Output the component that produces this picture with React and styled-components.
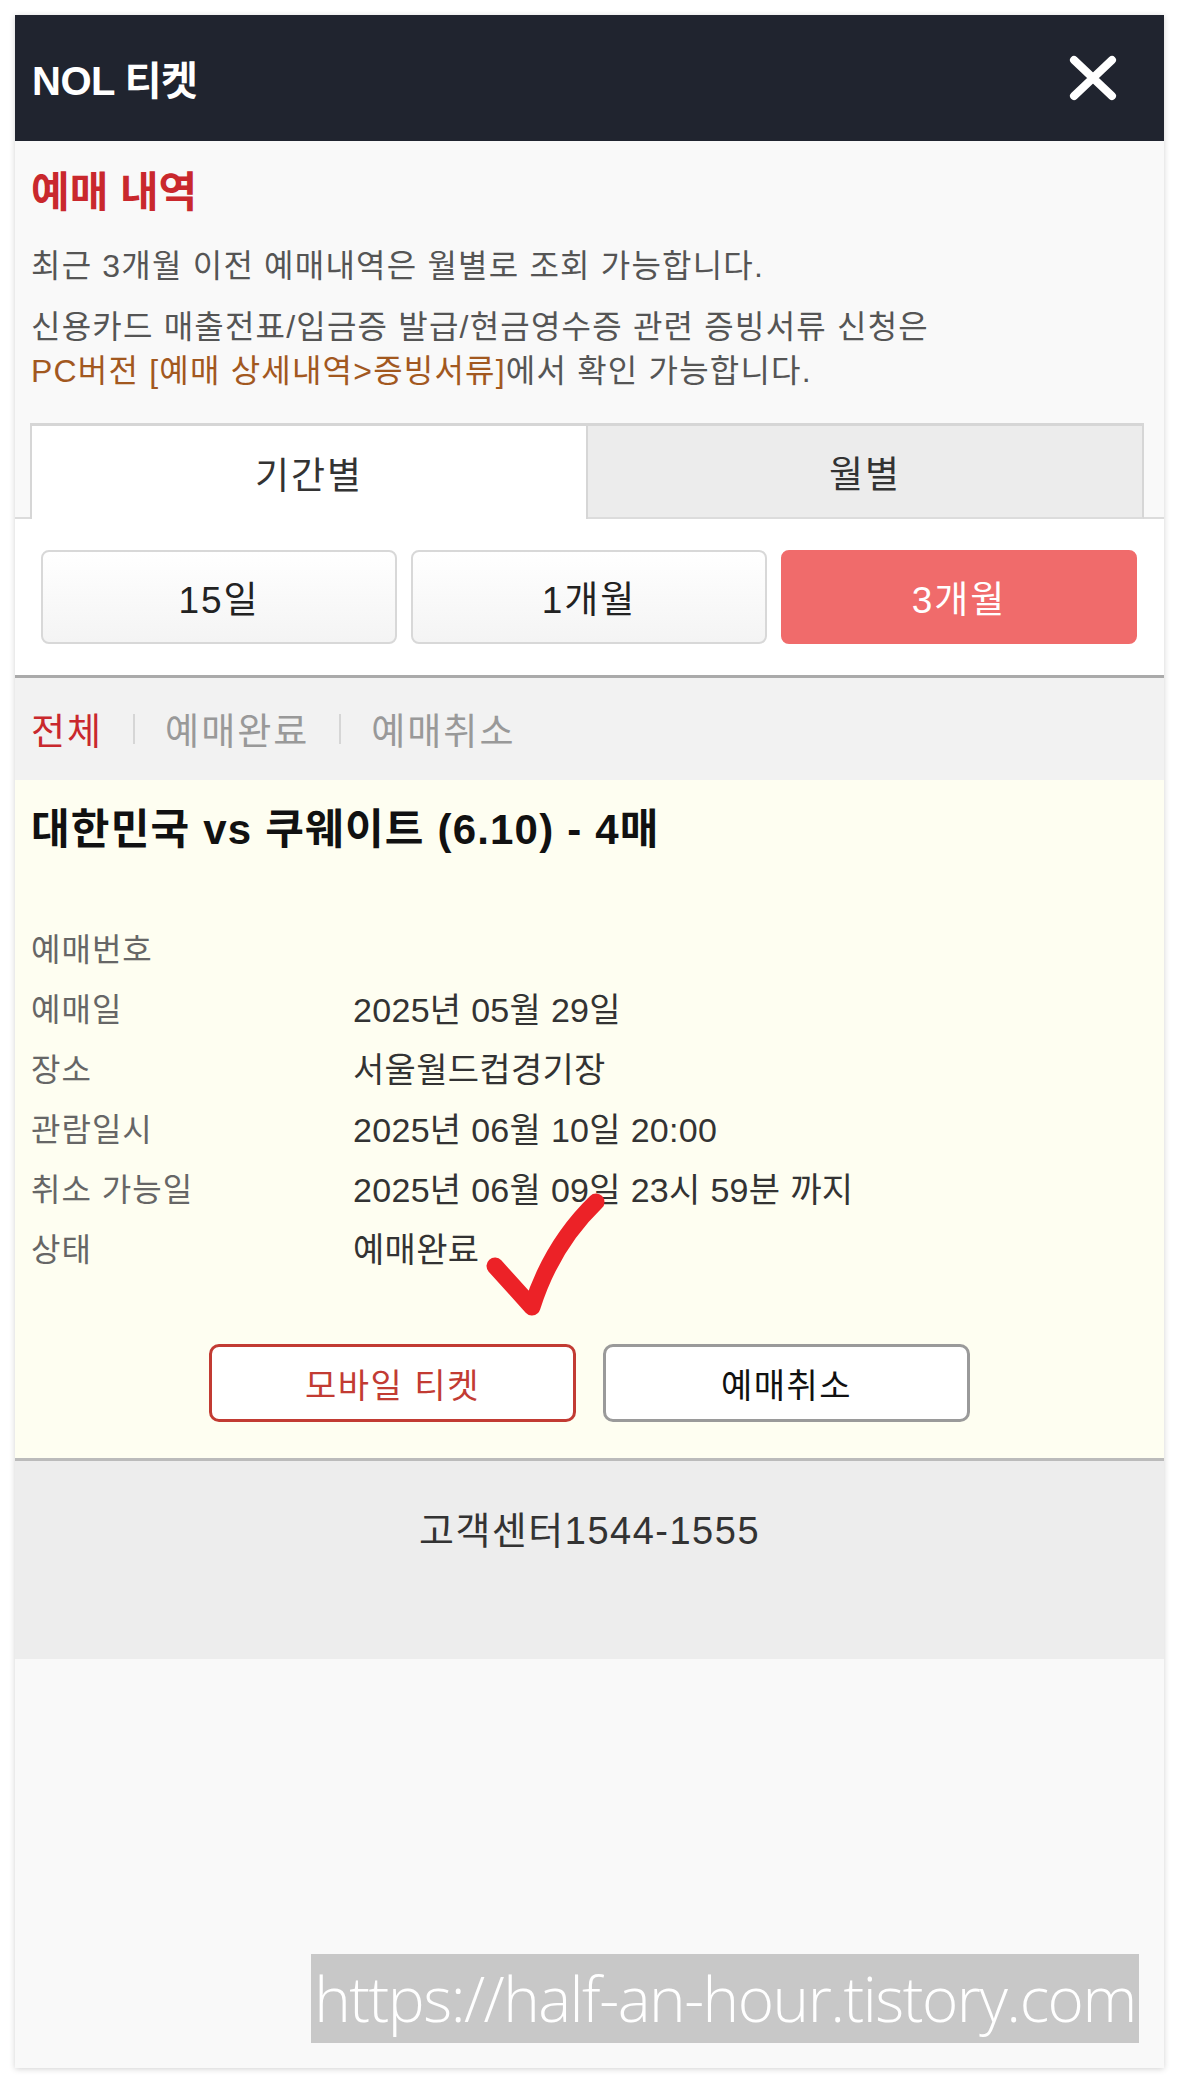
import React from 'react';
import styled, { createGlobalStyle } from 'styled-components';

const GlobalStyle = createGlobalStyle`
  body {
    margin: 0;
    background: #ffffff;
    font-family: "Liberation Sans", "Noto Sans CJK KR", sans-serif;
  }
`;

const Page = styled.div`
  padding: 15px;
  box-sizing: border-box;
  min-height: 2083px;
`;

const Card = styled.div`
  position: relative;
  width: 1149px;
  min-height: 2053px;
  background: #f9f9f9;
  box-shadow: 0 1px 6px rgba(0, 0, 0, 0.18);
  display: flex;
  flex-direction: column;
`;

const Header = styled.header`
  height: 126px;
  padding: 0 46px 0 17px;
  background: #20242f;
  display: flex;
  align-items: center;
  justify-content: space-between;
`;

const HeaderTitle = styled.h1`
  margin: 0;
  color: #fff;
  font-size: 40px;
  font-weight: 700;
  letter-spacing: -0.5px;
`;

const CloseButton = styled.button`
  border: 0;
  padding: 0;
  background: none;
  display: flex;
`;

const Intro = styled.section`
  padding: 22px 16px 30px;
`;

const Heading = styled.h2`
  margin: 0;
  color: #c9282d;
  font-size: 42px;
  font-weight: 700;
  line-height: 60px;
`;

const Desc = styled.p`
  margin: ${p => p.$gap}px 0 0;
  color: #555;
  font-size: 32px;
  line-height: 44px;
  letter-spacing: 1.2px;
`;

const Link = styled.span`
  color: #a2581f;
`;

const TabBar = styled.div`
  display: flex;
  padding: 0 20px 0 15px;
  border-bottom: 2px solid #dcdcdc;
`;

const Tab = styled.div`
  flex: 1;
  height: 96px;
  margin-bottom: -2px;
  box-sizing: border-box;
  border-style: solid;
  border-color: #d6d6d6;
  border-width: 3px 2px ${p => (p.$active ? '0' : '2px')} ${p => (p.$active ? '2px' : '0')};
  border-bottom-color: #dcdcdc;
  background: ${p => (p.$active ? '#fff' : '#ececec')};
  display: flex;
  align-items: center;
  justify-content: center;
  color: #333;
  font-size: 37px;
  letter-spacing: 2px;
`;

const PeriodPanel = styled.div`
  background: #fff;
  padding: 31px 27px 31px 26px;
  border-bottom: 3px solid #aaa;
  display: grid;
  grid-template-columns: repeat(3, 1fr);
  gap: 14px;
`;

const PeriodButton = styled.button`
  height: 94px;
  border-radius: 8px;
  border: 2px solid ${p => (p.$active ? '#f06b6b' : '#d8d8d8')};
  background: ${p => (p.$active ? '#f06b6b' : 'linear-gradient(#ffffff, #f4f4f4)')};
  color: ${p => (p.$active ? '#fff' : '#222')};
  font-family: inherit;
  font-size: 37px;
  letter-spacing: 2px;
`;

const FilterBar = styled.nav`
  height: 102px;
  padding: 0 16px;
  background: #f2f2f2;
  display: flex;
  align-items: center;
  gap: 30px;
`;

const FilterItem = styled.span`
  font-size: 37px;
  letter-spacing: 2px;
  color: ${p => (p.$active ? '#c9282d' : '#999')};
`;

const Divider = styled.span`
  width: 2px;
  height: 30px;
  background: #d6d6d6;
`;

const Booking = styled.section`
  position: relative;
  background: #fefef1;
  padding: 25px 16px 36px;
  border-bottom: 3px solid #bbb;
`;

const BookingTitle = styled.h3`
  margin: 0;
  color: #111;
  font-size: 42px;
  font-weight: 700;
  line-height: 50px;
  letter-spacing: 1.2px;
`;

const InfoList = styled.dl`
  margin: 62px 0 0;
  display: grid;
  grid-template-columns: 322px 1fr;
  grid-auto-rows: 60px;
  align-items: center;
`;

const Label = styled.dt`
  color: #666;
  font-size: 32px;
  letter-spacing: 1px;
`;

const Value = styled.dd`
  margin: 0;
  color: #333;
  font-size: 34px;
  letter-spacing: 0.3px;
`;

const Actions = styled.div`
  margin-top: 67px;
  display: flex;
  justify-content: center;
  gap: 27px;
`;

const ActionButton = styled.button`
  width: 367px;
  height: 78px;
  border-radius: 10px;
  background: #fff;
  border: 3px solid ${p => (p.$primary ? '#c23b33' : '#9a9a9a')};
  color: ${p => (p.$primary ? '#c23b33' : '#111')};
  font-family: inherit;
  font-size: 34px;
  letter-spacing: 1.5px;
`;

const CheckMark = styled.svg`
  position: absolute;
  left: 470px;
  top: 410px;
`;

const Footer = styled.footer`
  height: 198px;
  box-sizing: border-box;
  padding-top: 45px;
  background: #ededed;
  text-align: center;
  color: #333;
  font-size: 38px;
  line-height: 50px;
  letter-spacing: 1.5px;
`;

const Watermark = styled.div`
  position: absolute;
  right: 25px;
  bottom: 25px;
  width: 828px;
  height: 89px;
  background: #c8c8c8;
  color: #fff;
  font-family: "Open Sans", sans-serif;
  font-weight: 300;
  font-size: 62px;
  line-height: 89px;
  letter-spacing: -1.5px;
  text-align: center;
  white-space: nowrap;
  overflow: hidden;
`;

const rows = [
  ['예매번호', ''],
  ['예매일', '2025년 05월 29일'],
  ['장소', '서울월드컵경기장'],
  ['관람일시', '2025년 06월 10일 20:00'],
  ['취소 가능일', '2025년 06월 09일 23시 59분 까지'],
  ['상태', '예매완료'],
];

export default function App() {
  return (
    <Page>
      <GlobalStyle />
      <Card>
        <Header>
          <HeaderTitle>NOL 티켓</HeaderTitle>
          <CloseButton aria-label="닫기">
            <svg width="50" height="48" viewBox="0 0 50 48">
              <path d="M6 6 L44 42 M44 6 L6 42" stroke="#fff" strokeWidth="8" strokeLinecap="round" />
            </svg>
          </CloseButton>
        </Header>

        <Intro>
          <Heading>예매 내역</Heading>
          <Desc $gap={21}>최근 3개월 이전 예매내역은 월별로 조회 가능합니다.</Desc>
          <Desc $gap={17}>
            신용카드 매출전표/입금증 발급/현금영수증 관련 증빙서류 신청은
            <br />
            <Link>PC버전 [예매 상세내역&gt;증빙서류]</Link>에서 확인 가능합니다.
          </Desc>
        </Intro>

        <TabBar>
          <Tab $active>기간별</Tab>
          <Tab>월별</Tab>
        </TabBar>

        <PeriodPanel>
          <PeriodButton>15일</PeriodButton>
          <PeriodButton>1개월</PeriodButton>
          <PeriodButton $active>3개월</PeriodButton>
        </PeriodPanel>

        <FilterBar>
          <FilterItem $active>전체</FilterItem>
          <Divider />
          <FilterItem>예매완료</FilterItem>
          <Divider />
          <FilterItem>예매취소</FilterItem>
        </FilterBar>

        <Booking>
          <BookingTitle>대한민국 vs 쿠웨이트 (6.10) - 4매</BookingTitle>
          <InfoList>
            {rows.map(([label, value]) => (
              <React.Fragment key={label}>
                <Label>{label}</Label>
                <Value>{value}</Value>
              </React.Fragment>
            ))}
          </InfoList>
          <Actions>
            <ActionButton $primary>모바일 티켓</ActionButton>
            <ActionButton>예매취소</ActionButton>
          </Actions>
          <CheckMark width="125" height="130" viewBox="0 0 125 130">
            <path
              d="M10 76 L47 117 C58 82 78 44 111 12"
              fill="none"
              stroke="#ec2227"
              strokeWidth="17"
              strokeLinecap="round"
              strokeLinejoin="round"
            />
          </CheckMark>
        </Booking>

        <Footer>고객센터1544-1555</Footer>

        <Watermark>https://half-an-hour.tistory.com</Watermark>
      </Card>
    </Page>
  );
}
